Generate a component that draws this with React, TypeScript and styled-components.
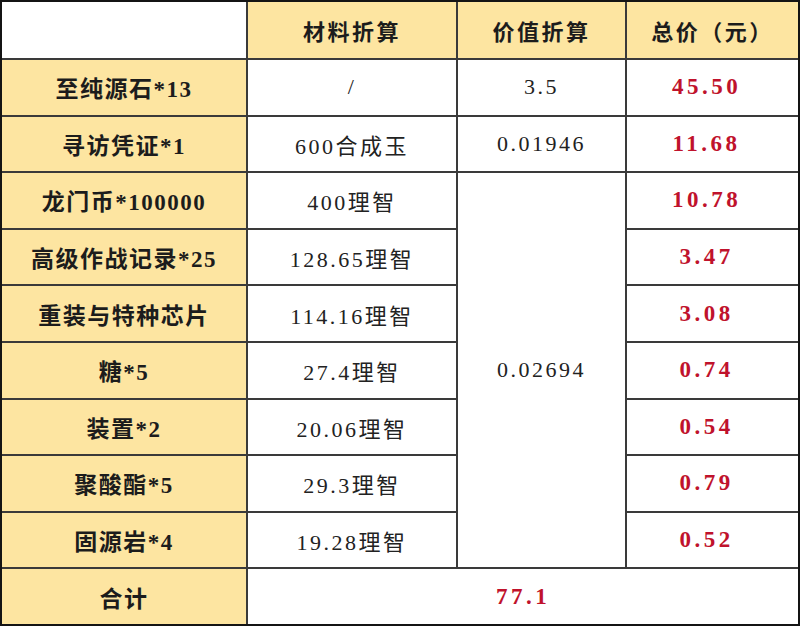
import React from "react";
import styled, { createGlobalStyle } from "styled-components";

const Global = createGlobalStyle`
  html, body { margin: 0; padding: 0; background: #ffffff; }
  * { box-sizing: border-box; }
`;

const Grid = styled.div`
  width: 800px;
  height: 626px;
  display: grid;
  grid-template-columns: 244px 208px 167px 171px;
  grid-template-rows: 56px repeat(10, 1fr);
  gap: 2px;
  background: #3a3a3a;
  border: 2px solid #141414;
  font-family: "Liberation Serif", "Noto Sans CJK SC", serif;
  color: #1c1c1c;
`;

type Tone = "yellow" | "white";

const Cell = styled.div<{ $tone?: Tone; $span?: number; $rows?: number; $shift?: number }>`
  display: flex;
  align-items: center;
  justify-content: center;
  background: ${(p) => (p.$tone === "yellow" ? "#fde5a1" : "#ffffff")};
  ${(p) => (p.$span ? `grid-column: span ${p.$span};` : "")}
  ${(p) => (p.$rows ? `grid-row: span ${p.$rows};` : "")}
  padding-right: ${(p) => p.$shift ?? 0}px;
  white-space: nowrap;
`;

const HeadText = styled.span`
  font-size: 22px;
  font-weight: 700;
  letter-spacing: 2.5px;
`;

const NameText = styled.span`
  font-size: 23px;
  font-weight: 700;
  letter-spacing: 1.5px;
`;

const ValueText = styled.span`
  font-family: "Liberation Serif", "Noto Sans CJK SC", serif;
  font-size: 22px;
  font-weight: 400;
  letter-spacing: 2.5px;
  color: #222;
`;

const PriceText = styled.span`
  font-size: 23px;
  font-weight: 700;
  letter-spacing: 3.5px;
  color: #c0122c;
`;

type Row = { name: string; material: string; value?: string; price: string };

const rows: Row[] = [
  { name: "至纯源石*13", material: "/", value: "3.5", price: "45.50" },
  { name: "寻访凭证*1", material: "600合成玉", value: "0.01946", price: "11.68" },
  { name: "龙门币*100000", material: "400理智", value: "0.02694", price: "10.78" },
  { name: "高级作战记录*25", material: "128.65理智", price: "3.47" },
  { name: "重装与特种芯片", material: "114.16理智", price: "3.08" },
  { name: "糖*5", material: "27.4理智", price: "0.74" },
  { name: "装置*2", material: "20.06理智", price: "0.54" },
  { name: "聚酸酯*5", material: "29.3理智", price: "0.79" },
  { name: "固源岩*4", material: "19.28理智", price: "0.52" },
];

export default function App() {
  return (
    <>
      <Global />
      <Grid>
        <Cell $tone="white" />
        <Cell $tone="yellow">
          <HeadText>材料折算</HeadText>
        </Cell>
        <Cell $tone="yellow">
          <HeadText>价值折算</HeadText>
        </Cell>
        <Cell $tone="yellow">
          <HeadText>总价（元）</HeadText>
        </Cell>
        {rows.map((r, i) => (
          <React.Fragment key={r.name}>
            <Cell $tone="yellow">
              <NameText>{r.name}</NameText>
            </Cell>
            <Cell>
              <ValueText>{r.material}</ValueText>
            </Cell>
            {r.value !== undefined && (
              <Cell $rows={i === 2 ? 7 : undefined}>
                <ValueText>{r.value}</ValueText>
              </Cell>
            )}
            <Cell $shift={12}>
              <PriceText>{r.price}</PriceText>
            </Cell>
          </React.Fragment>
        ))}
        <Cell $tone="yellow">
          <NameText>合计</NameText>
        </Cell>
        <Cell $span={3}>
          <PriceText>77.1</PriceText>
        </Cell>
      </Grid>
    </>
  );
}
